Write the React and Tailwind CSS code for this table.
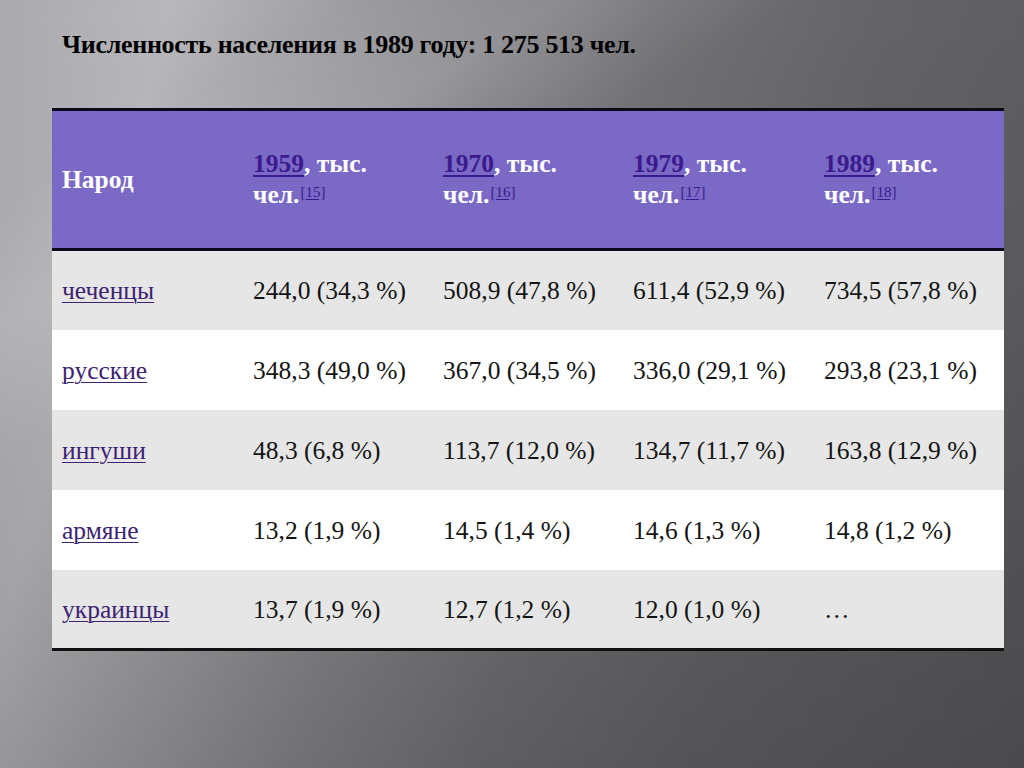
import React from "react";

const headers = [
  { year: "1959", ref: "[15]" },
  { year: "1970", ref: "[16]" },
  { year: "1979", ref: "[17]" },
  { year: "1989", ref: "[18]" },
];

const rows = [
  ["чеченцы", "244,0 (34,3 %)", "508,9 (47,8 %)", "611,4 (52,9 %)", "734,5 (57,8 %)"],
  ["русские", "348,3 (49,0 %)", "367,0 (34,5 %)", "336,0 (29,1 %)", "293,8 (23,1 %)"],
  ["ингуши", "48,3 (6,8 %)", "113,7 (12,0 %)", "134,7 (11,7 %)", "163,8 (12,9 %)"],
  ["армяне", "13,2 (1,9 %)", "14,5 (1,4 %)", "14,6 (1,3 %)", "14,8 (1,2 %)"],
  ["украинцы", "13,7 (1,9 %)", "12,7 (1,2 %)", "12,0 (1,0 %)", "…"],
];

export default function App() {
  return (
    <div className="w-[1024px] h-[768px] overflow-hidden relative bg-[linear-gradient(105deg,#aaa9ad_0%,#b8b7bb_14%,#a2a1a5_26%,#88878b_40%,#727174_55%,#646366_72%,#58575a_100%)] font-['Liberation_Serif',serif]">
      <div className="absolute inset-0 bg-[linear-gradient(180deg,rgba(0,0,0,0)_0%,rgba(0,0,0,0.04)_40%,rgba(0,0,0,0.16)_100%)]" />
      <div className="absolute inset-0 bg-[linear-gradient(150deg,transparent_0%,transparent_15%,rgba(255,255,255,0.10)_24%,transparent_34%)]" />
      <div className="relative px-[52px] pt-[30px]">
        <h1 className="pl-[10px] text-[26px] leading-[30px] font-bold text-black tracking-[-0.3px]">
          Численность населения в 1989 году: 1 275 513 чел.
        </h1>
        <table className="mt-[48px] w-[952px] border-collapse table-fixed">
          <colgroup>
            <col className="w-[191px]" />
            <col className="w-[190px]" />
            <col className="w-[190px]" />
            <col className="w-[191px]" />
            <col className="w-[190px]" />
          </colgroup>
          <thead>
            <tr className="bg-[#7b69c6] border-t-[3px] border-b-[3px] border-[#0c0a1a] h-[140px]">
              <th className="text-left align-middle pl-[10px] text-[25.5px] leading-[31px] font-bold text-white">
                Народ
              </th>
              {headers.map((h) => (
                <th
                  key={h.year}
                  className="text-left align-middle pl-[10px] pb-[2px] text-[25.5px] leading-[31px] font-bold text-white"
                >
                  <span className="text-[#3a1a8c] underline decoration-[2px] underline-offset-[3px]">
                    {h.year}
                  </span>
                  , тыс.
                  <br />
                  чел.
                  <sup className="text-[15px] font-normal text-[#3a1a8c] underline underline-offset-[2px] relative top-[-6px] ml-[1px]">
                    {h.ref}
                  </sup>
                </th>
              ))}
            </tr>
          </thead>
          <tbody>
            {rows.map((r, i) => (
              <tr
                key={r[0]}
                className={`${i % 2 === 0 ? "bg-[#e6e6e6]" : "bg-white"} ${
                  i === rows.length - 1 ? "border-b-[3px] border-[#111]" : ""
                } h-[80px]`}
              >
                <td className="pl-[10px] pt-[2px] align-middle text-[25.5px] leading-[30px]">
                  <span className="text-[#3d2272] underline decoration-[1px] underline-offset-[3px]">
                    {r[0]}
                  </span>
                </td>
                {r.slice(1).map((c, j) => (
                  <td
                    key={j}
                    className="pl-[10px] pt-[2px] align-middle text-[25.5px] leading-[30px] text-[#141414]"
                  >
                    {c}
                  </td>
                ))}
              </tr>
            ))}
          </tbody>
        </table>
      </div>
    </div>
  );
}
